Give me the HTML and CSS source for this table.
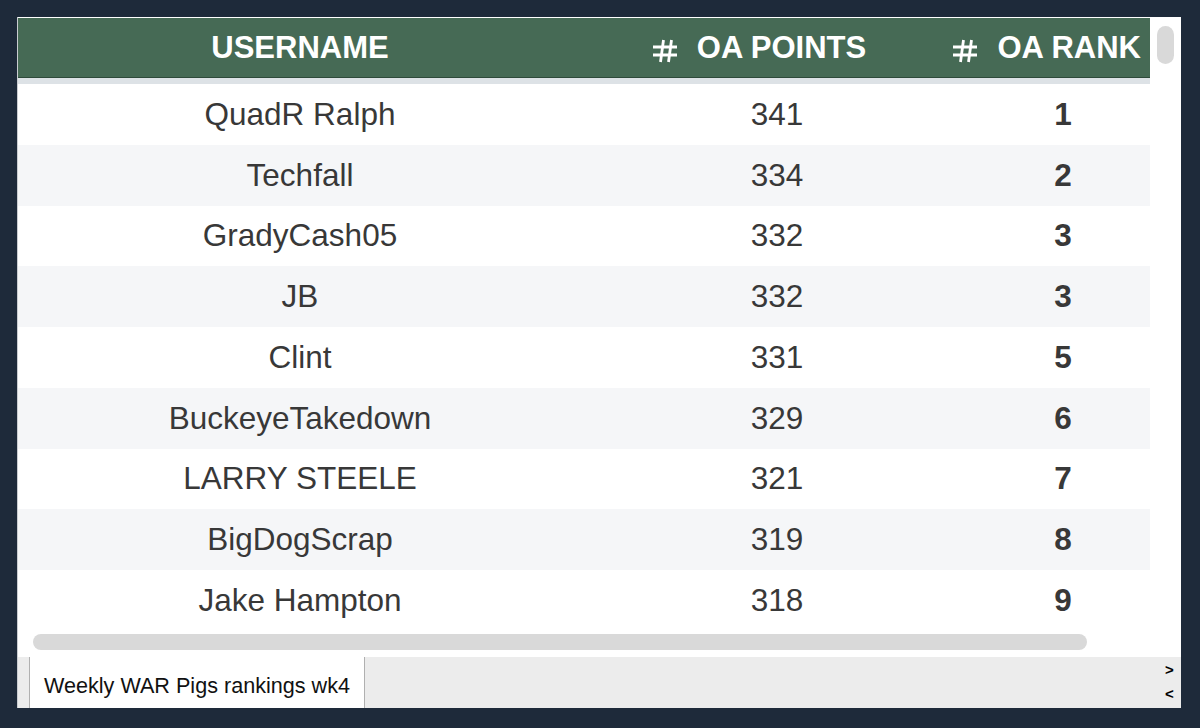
FILE: index.html
```html
<!DOCTYPE html>
<html>
<head>
<meta charset="utf-8">
<link rel="stylesheet" href="styles.css">
</head>
<body>
<div class="panel">
  <div class="main">
    <div class="table-area">
      <div class="thead">
        <div class="th">USERNAME</div>
        <div class="th th-num"><svg class="hash" viewBox="0 0 26 24" width="26" height="24"><path d="M1 8H25M1 16H25M11.5 1L8.5 23M19.5 1L16.5 23" stroke="#ffffff" stroke-width="2.8" fill="none"/></svg>OA POINTS</div>
        <div class="th th-last"><svg class="hash" viewBox="0 0 26 24" width="26" height="24"><path d="M1 8H25M1 16H25M11.5 1L8.5 23M19.5 1L16.5 23" stroke="#ffffff" stroke-width="2.8" fill="none"/></svg>OA RANK</div>
      </div>
      <div class="strip"></div>
      <div class="rows">
        <div class="row"><div class="td">QuadR Ralph</div><div class="td">341</div><div class="td rank">1</div></div>
        <div class="row alt"><div class="td">Techfall</div><div class="td">334</div><div class="td rank">2</div></div>
        <div class="row"><div class="td">GradyCash05</div><div class="td">332</div><div class="td rank">3</div></div>
        <div class="row alt"><div class="td">JB</div><div class="td">332</div><div class="td rank">3</div></div>
        <div class="row"><div class="td">Clint</div><div class="td">331</div><div class="td rank">5</div></div>
        <div class="row alt"><div class="td">BuckeyeTakedown</div><div class="td">329</div><div class="td rank">6</div></div>
        <div class="row"><div class="td">LARRY STEELE</div><div class="td">321</div><div class="td rank">7</div></div>
        <div class="row alt"><div class="td">BigDogScrap</div><div class="td">319</div><div class="td rank">8</div></div>
        <div class="row"><div class="td">Jake Hampton</div><div class="td">318</div><div class="td rank">9</div></div>
      </div>
      <div class="hscroll"><div class="hthumb"></div></div>
    </div>
    <div class="vscroll"><div class="vthumb"></div></div>
  </div>
  <div class="tabbar">
    <div class="tab">Weekly WAR Pigs rankings wk4</div>
    <div class="arrows"><span>&gt;</span><span>&lt;</span></div>
  </div>
</div>
</body>
</html>
```
FILE: styles.css
```css
html, body {
  margin: 0;
  padding: 0;
}
body {
  background: #1e2a3a;
  width: 1200px;
  height: 728px;
  overflow: hidden;
  font-family: "Liberation Sans", Arial, sans-serif;
}
.panel {
  margin: 17px 0 0 17px;
  width: 1164px;
  height: 691px;
  background: #ffffff;
  display: flex;
  flex-direction: column;
  box-sizing: border-box;
  padding-top: 1px;
  border-left: 1px solid #c9ccd0;
}
.main {
  display: flex;
  height: 639px;
}
.table-area {
  width: 1132px;
  display: flex;
  flex-direction: column;
}
.thead {
  display: grid;
  grid-template-columns: 564px 390px 178px;
  grid-template-rows: 59px;
  height: 59px;
  background: #466a55;
  border-bottom: 1px solid #2e4a3a;
}
.th {
  display: flex;
  align-items: center;
  justify-content: center;
  color: #ffffff;
  font-weight: bold;
  font-size: 31px;
  white-space: nowrap;
  min-width: 0;
}
.th-num {
  padding-right: 36px;
}
.th-last {
  justify-content: flex-end;
  padding-right: 9px;
}
.hash {
  flex: none;
  margin-right: 19px;
  margin-top: 6px;
}
.strip {
  height: 6px;
  background: #dde2e6;
}
.rows {
  display: flex;
  flex-direction: column;
}
.row {
  display: grid;
  grid-template-columns: 564px 390px 1fr;
  height: 60.75px;
  background: #ffffff;
}
.row.alt {
  background: #f5f6f8;
}
.td {
  display: flex;
  align-items: center;
  justify-content: center;
  font-size: 31.5px;
  color: #383838;
}
.td.rank {
  font-weight: bold;
  padding-left: 4px;
}
.hscroll {
  flex: 1;
  padding: 3px 0 0 15px;
}
.hthumb {
  width: 1054px;
  height: 16px;
  border-radius: 8px;
  background: #d9d9d9;
}
.vscroll {
  flex: 1;
  padding: 8px 0 0 7px;
}
.vthumb {
  width: 17px;
  height: 38px;
  border-radius: 9px;
  background: #d9d9d9;
}
.tabbar {
  flex: 1;
  background: #ececec;
  display: flex;
  align-items: stretch;
  padding-left: 11px;
}
.tab {
  width: 336px;
  background: #ffffff;
  border-left: 1px solid #b0b0b0;
  border-right: 1px solid #b0b0b0;
  display: flex;
  align-items: center;
  justify-content: center;
  font-size: 21.6px;
  color: #111111;
  padding-top: 6px;
  box-sizing: border-box;
}
.arrows {
  margin-left: auto;
  width: 16px;
  display: flex;
  flex-direction: column;
  justify-content: space-around;
  font-size: 15px;
  font-weight: bold;
  color: #000;
  padding: 0 0 2px 0;
}
```
